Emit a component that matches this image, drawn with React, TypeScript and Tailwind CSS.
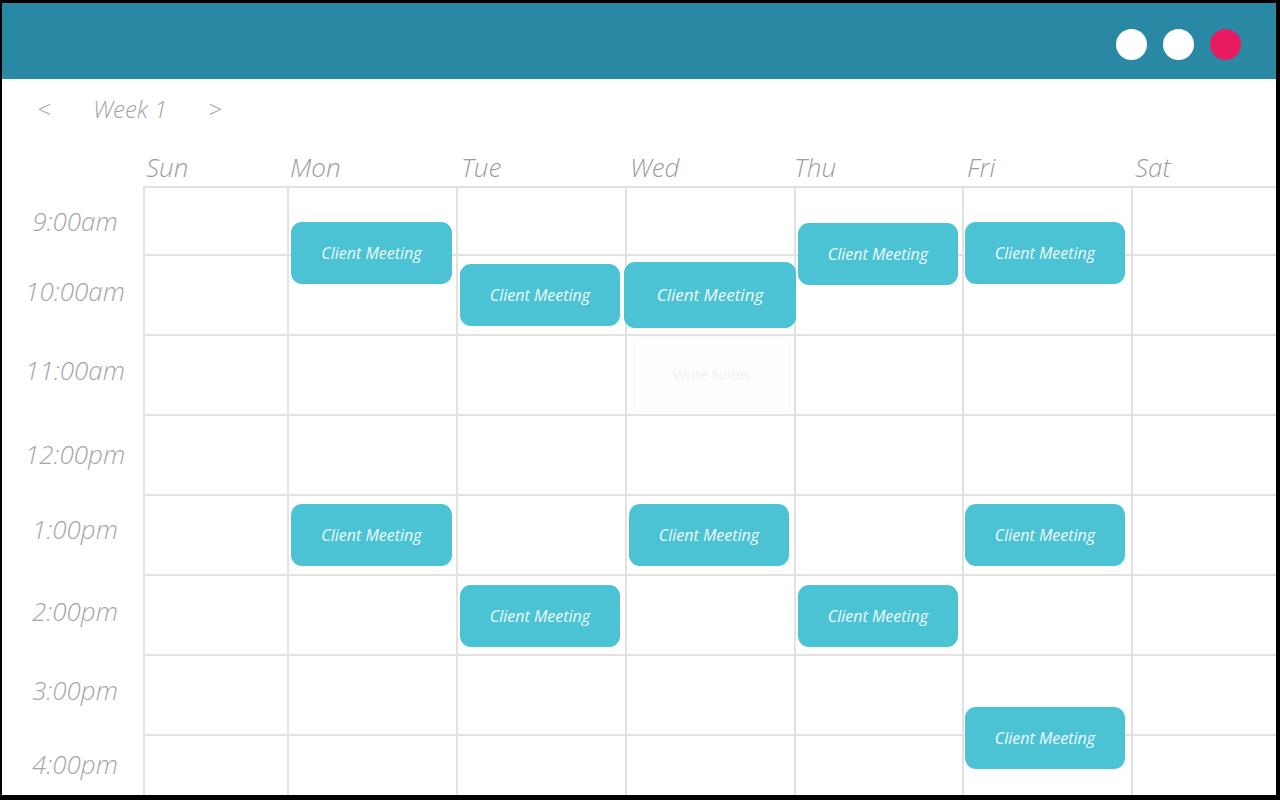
import React from "react";

const days = ["Sun", "Mon", "Tue", "Wed", "Thu", "Fri", "Sat"];
const dayPads = ["pl-[3px]", "pl-[3px]", "pl-[5px]", "pl-[5px]", "pl-0", "pl-[5px]", "pl-[4px]"];

const hours = [
  { label: "9:00am", row: "h-[68px]", pad: "pt-[2px]" },
  { label: "10:00am", row: "h-[80px]", pad: "pb-[6px]" },
  { label: "11:00am", row: "h-[80px]", pad: "pb-[8px]" },
  { label: "12:00pm", row: "h-[80px]", pad: "" },
  { label: "1:00pm", row: "h-[80px]", pad: "pb-[10px]" },
  { label: "2:00pm", row: "h-[80px]", pad: "pb-[6px]" },
  { label: "3:00pm", row: "h-[80px]", pad: "pb-[8px]" },
  { label: "4:00pm", row: "h-[61px]", pad: "" },
];

// day index, hour index, position inside the cell
const events: { day: number; hour: number; pos: string }[] = [
  { day: 1, hour: 0, pos: "left-[2px] top-[34px] w-[161px] h-[62px]" },
  { day: 2, hour: 1, pos: "left-[2px] top-[8px] w-[160px] h-[62px]" },
  { day: 3, hour: 1, pos: "left-[-3px] top-[6px] w-[172px] h-[66px] text-[17px]" },
  { day: 4, hour: 0, pos: "left-[2px] top-[35px] w-[160px] h-[62px]" },
  { day: 5, hour: 0, pos: "left-[1px] top-[34px] w-[160px] h-[62px]" },
  { day: 1, hour: 4, pos: "left-[2px] top-[8px] w-[161px] h-[62px]" },
  { day: 3, hour: 4, pos: "left-[2px] top-[8px] w-[160px] h-[62px]" },
  { day: 5, hour: 4, pos: "left-[1px] top-[8px] w-[160px] h-[62px]" },
  { day: 2, hour: 5, pos: "left-[2px] top-[9px] w-[160px] h-[62px]" },
  { day: 4, hour: 5, pos: "left-[2px] top-[9px] w-[160px] h-[62px]" },
  { day: 5, hour: 6, pos: "left-[1px] top-[51px] w-[160px] h-[62px]" },
];

const colWidths = ["w-[144px]", "w-[169px]", "w-[169px]", "w-[169px]", "w-[168px]", "w-[169px]", "w-[145px]"];

const font = { fontFamily: '"Open Sans", "DejaVu Sans", sans-serif' };

const Cell: React.FC<{ day: number; hour: number; width: string; height: string }> = ({ day, hour, width, height }) => {
  const here = events.filter((e) => e.day === day && e.hour === hour);
  const notes = day === 3 && hour === 2;
  return (
    <div className={`relative shrink-0 border-l-2 border-t-2 border-[#e2e2e2] ${width} ${height}`}>
      {here.map((e, i) => (
        <div
          key={i}
          className={`absolute z-10 flex items-center justify-center rounded-[11px] bg-[#4cc3d4] text-[16px] italic text-[#eefafc] ${e.pos}`}
        >
          Client Meeting
        </div>
      ))}
      {notes && (
        <div className="absolute left-[7px] top-[1px] z-10 flex h-[75px] w-[156px] items-center justify-center rounded-[6px] border border-[#f6f6f6] bg-[#fefefe] text-[14px] text-[#f0f0f0]">
          Write Notes
        </div>
      )}
    </div>
  );
};

export default function App() {
  return (
    <div className="h-[800px] w-[1280px] overflow-hidden bg-black pb-[5px] pl-[2px] pr-[4px] pt-[3px]" style={font}>
      <div className="flex h-full w-full flex-col overflow-hidden bg-white">
        <div className="flex h-[76px] shrink-0 items-center justify-end gap-[16px] bg-[#2989a5] pr-[35px] pt-[6px]">
          <span className="h-[31px] w-[31px] rounded-full bg-white" />
          <span className="h-[31px] w-[31px] rounded-full bg-white" />
          <span className="h-[31px] w-[31px] rounded-full bg-[#e91b60]" />
        </div>

        <div className="flex h-[62px] shrink-0 items-center pb-[2px] text-[24px] font-light italic text-[#a3a3a3]">
          <span className="ml-[35px] w-[56px]">&lt;</span>
          <span className="w-[115px]">Week 1</span>
          <span>&gt;</span>
        </div>

        <div className="flex h-[45px] shrink-0 items-end pb-[3px] text-[26px] font-light italic leading-[32px] text-[#9d9d9d]">
          <div className="w-[141px] shrink-0" />
          {days.map((d, i) => (
            <div key={d} className={`shrink-0 ${colWidths[i]} ${dayPads[i]}`}>
              {d}
            </div>
          ))}
        </div>

        <div className="flex flex-col">
          {hours.map((h, hi) => (
            <div key={h.label} className="flex">
              <div
                className={`flex w-[141px] shrink-0 items-center justify-center pl-[5px] text-[26px] font-light italic text-[#a6a6a6] ${h.row} ${h.pad}`}
              >
                {h.label}
              </div>
              {days.map((d, di) => (
                <Cell key={d} day={di} hour={hi} width={colWidths[di]} height={h.row} />
              ))}
            </div>
          ))}
        </div>
      </div>
    </div>
  );
}
